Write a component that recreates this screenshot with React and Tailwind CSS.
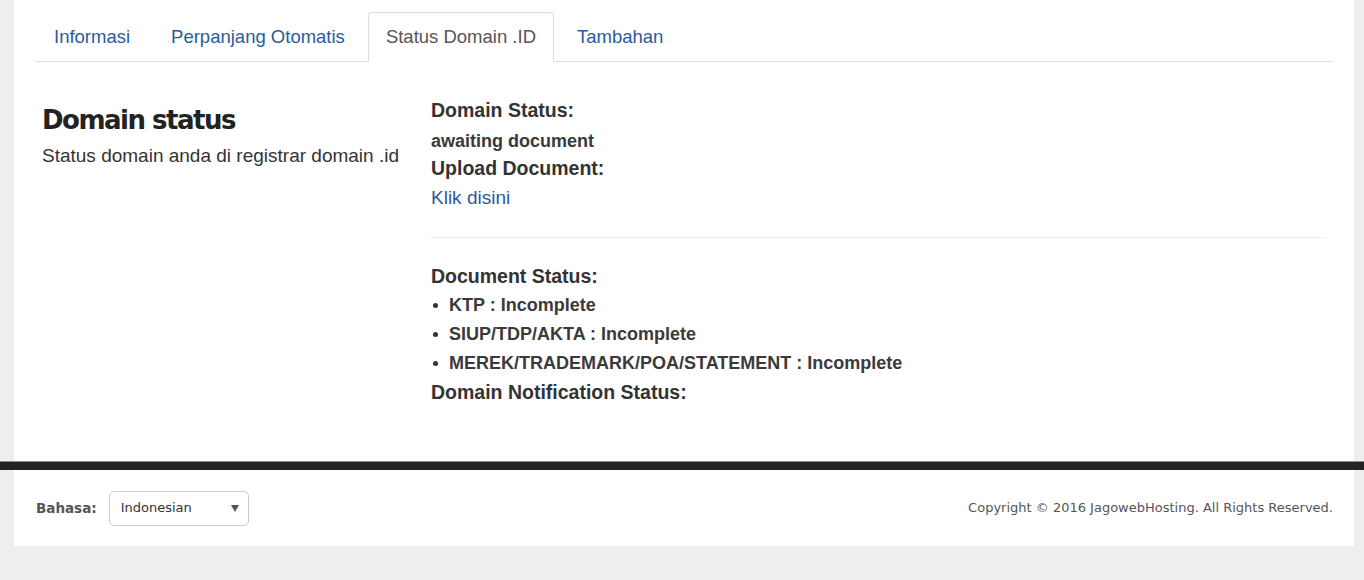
import React from "react";

const tabs = ["Informasi", "Perpanjang Otomatis", "Status Domain .ID", "Tambahan"];

const docs = [
    "KTP : Incomplete",
    "SIUP/TDP/AKTA : Incomplete",
    "MEREK/TRADEMARK/POA/STATEMENT : Incomplete",
];

function Tabs({ active }) {
    return (
        <ul className="flex border-b border-[#dddddd]">
            {tabs.map((tab) => (
                <li key={tab} className="mr-[5px] -mb-px">
                    {tab === active ? (
                        <span className="flex h-[50px] items-center rounded-t-[4px] border border-[#dddddd] border-b-white bg-white px-[17px] text-[18.5px] text-[#555555]">
                            {tab}
                        </span>
                    ) : (
                        <a href="#" className="flex h-[50px] items-center border border-transparent px-[17px] text-[18.5px] text-[#2b5b9c]">
                            {tab}
                        </a>
                    )}
                </li>
            ))}
        </ul>
    );
}

export default function App() {
    return (
        <div className="min-h-[580px] bg-[#eeeeee] font-['Liberation_Sans',Arial,sans-serif]">
            <div className="ml-[14px] h-[461px] w-[1340px] bg-white pl-[22px] pr-[21px] pt-[12px]">
                <Tabs active="Status Domain .ID" />

                <div className="flex">
                    {/* kiri */}
                    <div className="w-[395px] shrink-0 pl-[6px] pt-[41px]">
                        <h1 className="text-[26px] leading-[34px] font-bold tracking-[-1.5px] text-[#222222] font-['DejaVu_Sans','Liberation_Sans',sans-serif]">
                            Domain status
                        </h1>
                        <p className="mt-[6px] text-[19px] leading-[26px] text-[#333333]">
                            Status domain anda di registrar domain .id
                        </p>
                    </div>

                    {/* kanan */}
                    <div className="flex-1 pr-[8px] pt-[34px] text-[#333333]">
                        <div className="text-[19.5px] leading-[29px] font-bold">Domain Status:</div>
                        <div className="pt-[2px] text-[18px] leading-[29px] font-bold text-[#3a3a3a]">awaiting document</div>
                        <div className="text-[19.5px] leading-[25px] font-bold">Upload Document:</div>
                        <a href="#" className="block pt-[2px] text-[19px] leading-[29px] text-[#2b5b9c]">
                            Klik disini
                        </a>

                        <hr className="mt-[25px] border-t border-[#eeeeee]" />

                        <div className="mt-[24px] text-[19.5px] leading-[29px] font-bold">Document Status:</div>
                        <ul>
                            {docs.map((d) => (
                                <li key={d} className="flex items-center text-[18px] leading-[29px] font-bold text-[#3a3a3a]">
                                    <span className="ml-[2px] mr-[11px] h-[5px] w-[5px] rounded-full bg-[#333333]"></span>
                                    {d}
                                </li>
                            ))}
                        </ul>
                        <div className="text-[19.5px] leading-[29px] font-bold">Domain Notification Status:</div>
                    </div>
                </div>
            </div>

            <div className="h-[9px] border-t border-[#8a8a8a] bg-[#232323]"></div>

            <div className="ml-[14px] flex h-[76px] w-[1340px] items-center justify-between bg-white pl-[22px] pr-[21px] font-['DejaVu_Sans',Verdana,sans-serif] text-[#555555]">
                <div className="flex items-center gap-[12px]">
                    <span className="text-[13.5px] font-bold">Bahasa:</span>
                    <div className="flex h-[35px] w-[140px] items-center justify-between rounded-[5px] border border-[#cccccc] pl-[11px] pr-[9px] text-[13px] text-[#333333]">
                        <span>Indonesian</span>
                        <svg width="8" height="7" viewBox="0 0 8 7">
                            <path d="M0 0h8L4 7z" fill="#555555" />
                        </svg>
                    </div>
                </div>
                <div className="text-[13px]">Copyright © 2016 JagowebHosting. All Rights Reserved.</div>
            </div>
        </div>
    );
}
